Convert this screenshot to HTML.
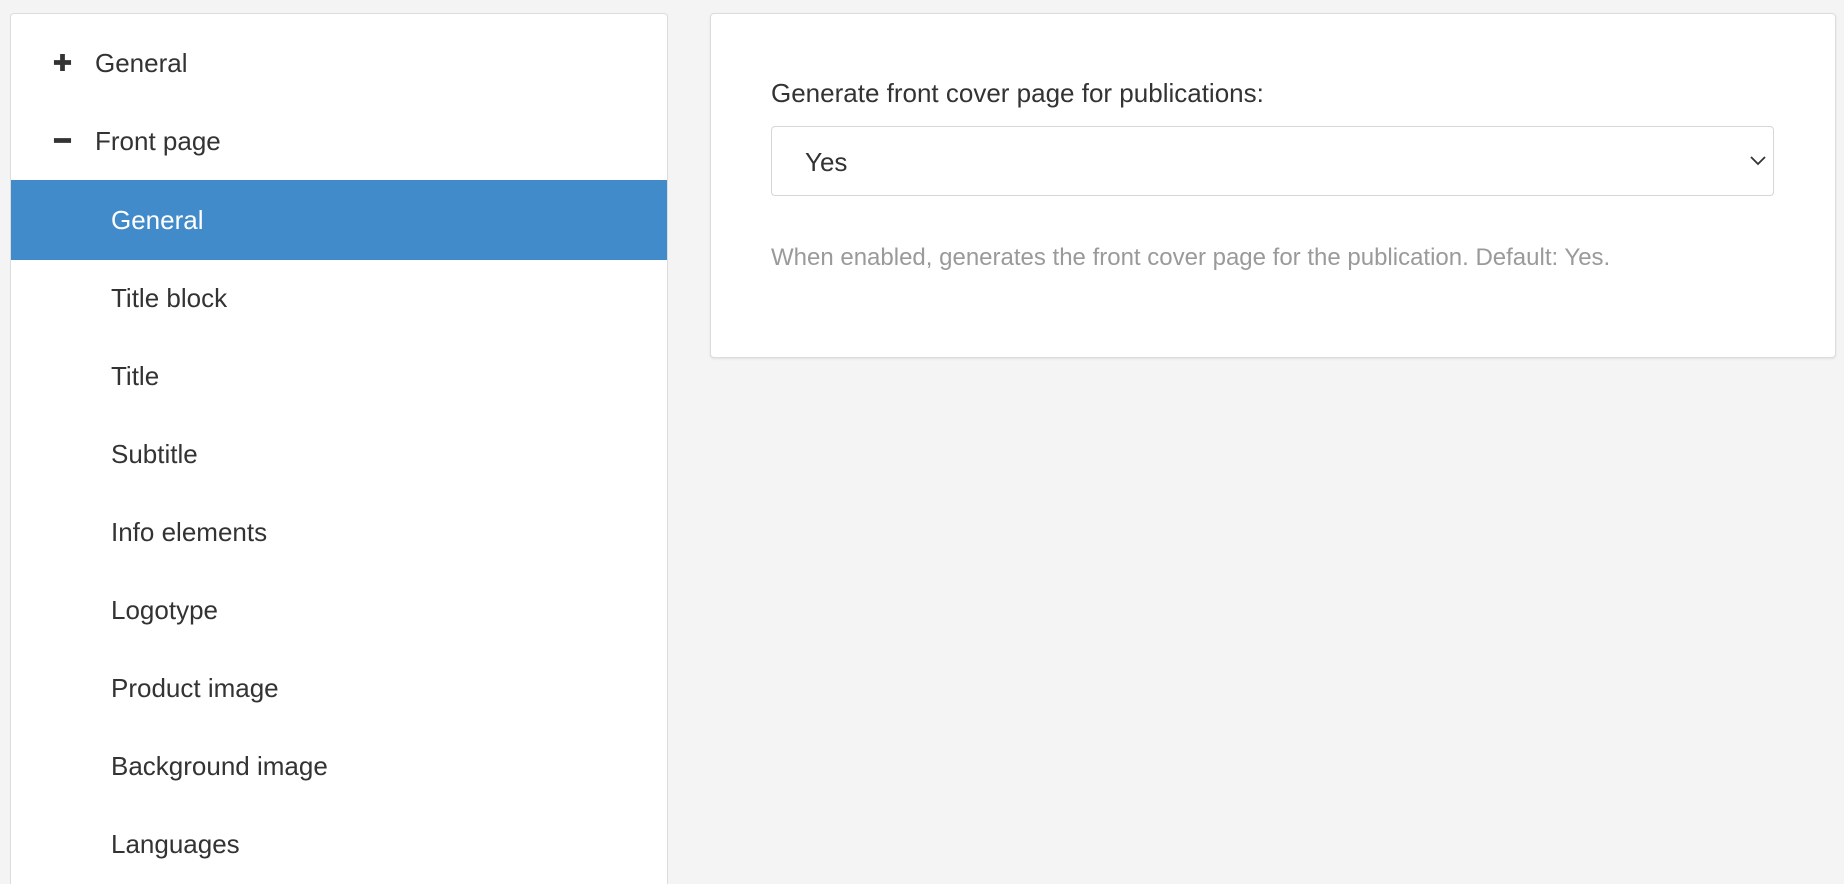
<!DOCTYPE html>
<html><head><style>
html,body{margin:0;padding:0;background:#f4f4f4;width:1844px;height:884px;overflow:hidden;font-family:"Liberation Sans",sans-serif;}
body{position:relative;}
.left{position:absolute;left:10px;top:13px;width:656px;height:880px;background:#fff;border:1px solid #dcdcdc;border-bottom:none;border-radius:4px 4px 0 0;}
.row{position:absolute;left:0;right:0;height:78px;line-height:78px;font-size:26px;color:#333;}
.row.sel{background:#428bca;color:#fff;}
.row span{position:absolute;}
.ic{position:absolute;left:42px;width:19px;}
.right{position:absolute;left:710px;top:13px;width:1124px;height:343px;background:#fff;border:1px solid #dcdcdc;border-radius:4px;box-shadow:0 1px 2px rgba(0,0,0,.08);}
.lbl{position:absolute;left:60px;top:64px;font-size:26px;color:#333;}
.sel2{position:absolute;left:60px;top:112px;width:1003px;height:70px;border:1px solid #d6d6d6;border-radius:4px;box-sizing:border-box;}
.sel2 span{position:absolute;left:33px;top:20px;font-size:26px;color:#333;}
.sel2 svg{position:absolute;right:6px;top:28px;}
.help{position:absolute;left:60px;top:230px;font-size:24px;color:#9a9a9a;}
</style></head><body>
<div class="left">
 <div class="row" style="top:10px"><svg class="ic" viewBox="0 0 20 20" style="top:29px;height:19px"><path d="M10 1v18M1 10h18" stroke="#333" stroke-width="5"/></svg><span style="left:84px">General</span></div>
 <div class="row" style="top:88px"><svg class="ic" viewBox="0 0 20 20" style="top:29px;height:19px"><path d="M1 10h18" stroke="#333" stroke-width="5"/></svg><span style="left:84px">Front page</span></div>
 <div class="row sel" style="top:166px;height:80px;line-height:80px"><span style="left:100px">General</span></div>
 <div class="row" style="top:245px"><span style="left:100px">Title block</span></div>
 <div class="row" style="top:323px"><span style="left:100px">Title</span></div>
 <div class="row" style="top:401px"><span style="left:100px">Subtitle</span></div>
 <div class="row" style="top:479px"><span style="left:100px">Info elements</span></div>
 <div class="row" style="top:557px"><span style="left:100px">Logotype</span></div>
 <div class="row" style="top:635px"><span style="left:100px">Product image</span></div>
 <div class="row" style="top:713px"><span style="left:100px">Background image</span></div>
 <div class="row" style="top:791px"><span style="left:100px">Languages</span></div>
</div>
<div class="right">
 <div class="lbl">Generate front cover page for publications:</div>
 <div class="sel2"><span>Yes</span><svg width="18" height="12" viewBox="0 0 18 12"><path d="M2 2l7 7 7-7" fill="none" stroke="#333" stroke-width="1.8"/></svg></div>
 <div class="help">When enabled, generates the front cover page for the publication. Default: Yes.</div>
</div>
</body></html>
